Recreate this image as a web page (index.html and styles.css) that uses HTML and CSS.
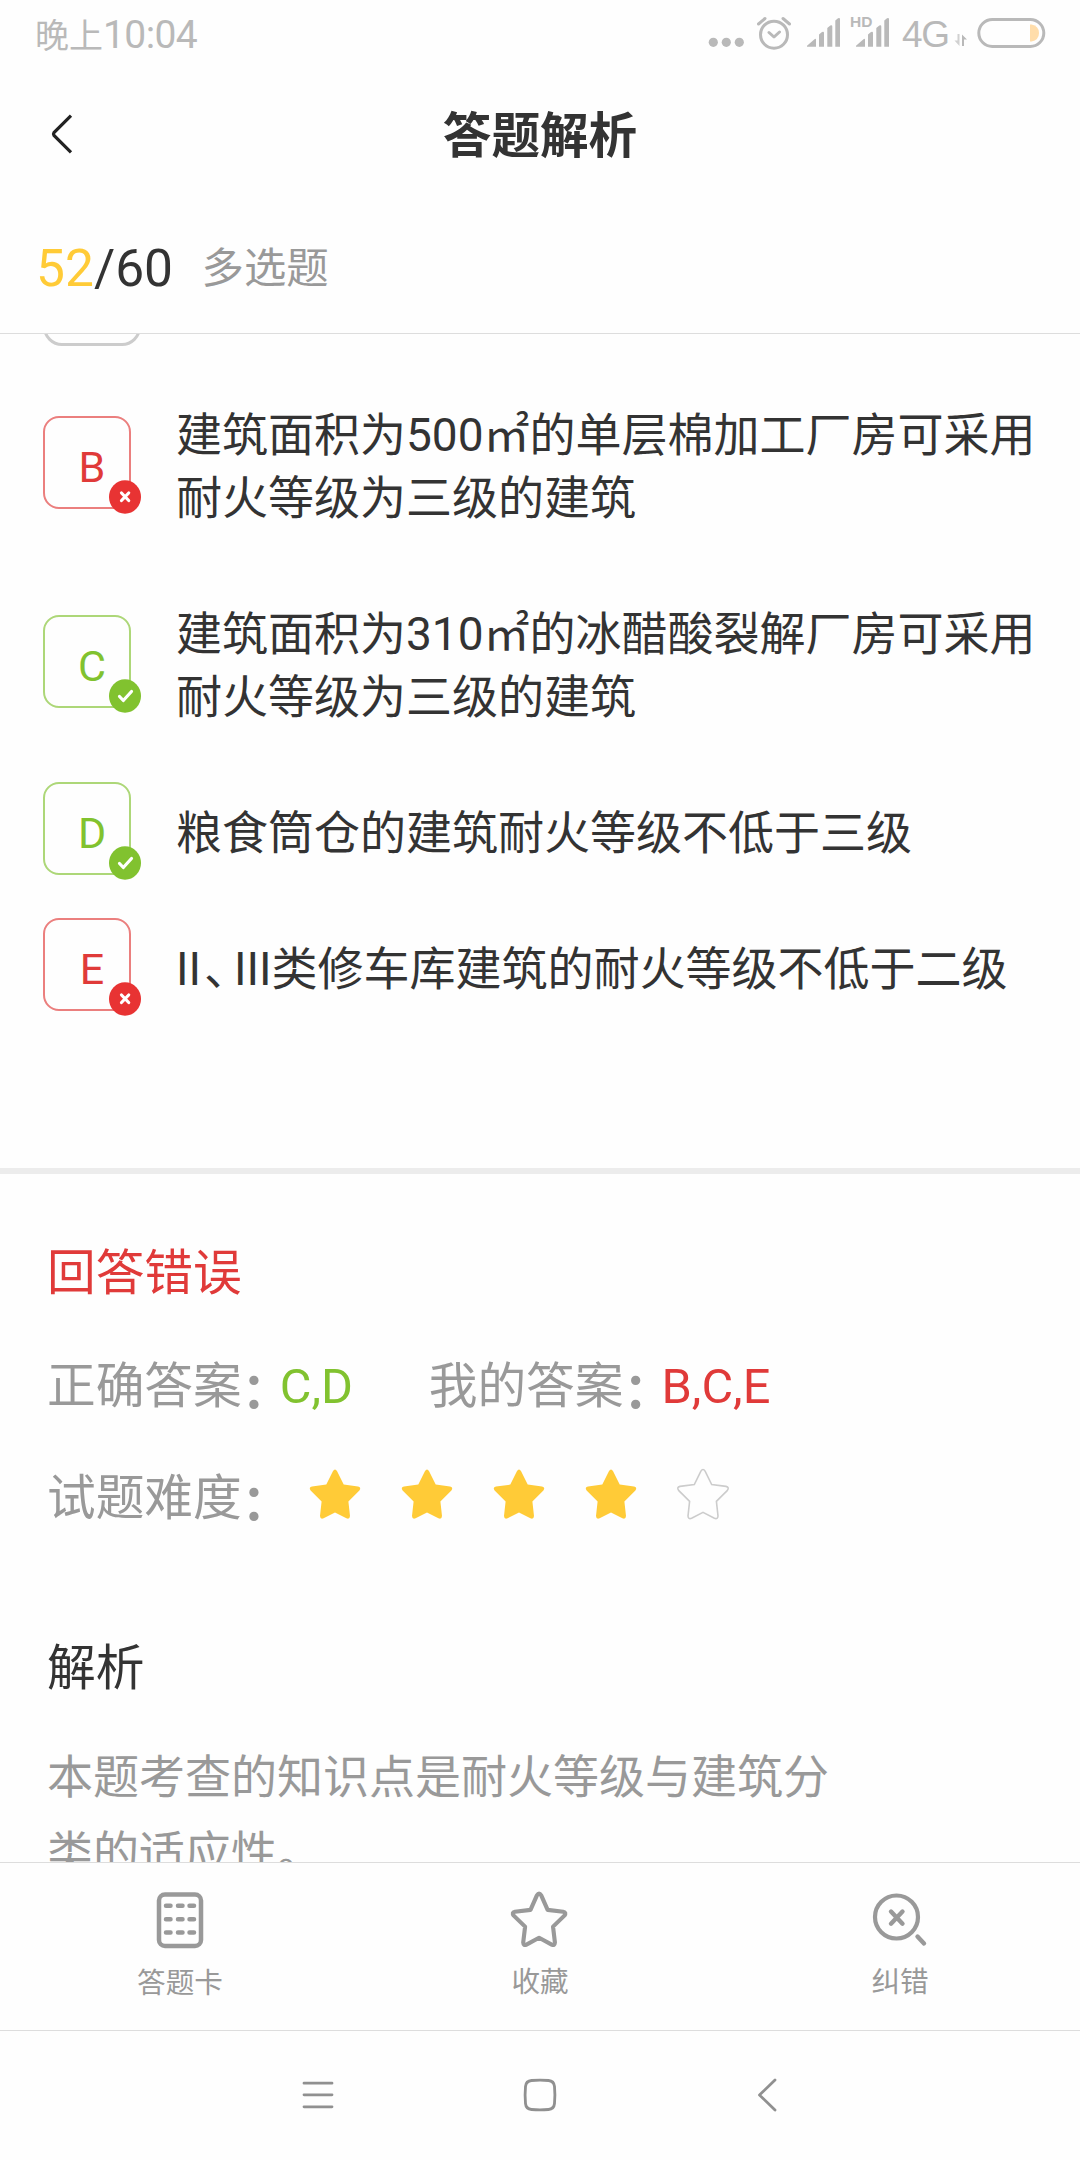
FILE: index.html
```html
<!DOCTYPE html>
<html lang="zh-CN">
<head>
<meta charset="utf-8">
<title>答题解析</title>
<link rel="stylesheet" href="styles.css">
</head>
<body>
<svg class="defs" width="0" height="0" aria-hidden="true">
  <symbol id="star" viewBox="0 0 54 54"><path d="M24.9 4.2q2.1-3.4 4.2 0L35.7 17.6 50 19.4q3.6.9 1.4 4L40.4 34.4 42 49q-.2 3.600-3.600 2.300L27 45.400 15.600 51.300Q12.200 52.600 12 49L13.600 34.400 2.600 23.400Q.4 20.300 4 19.400L18.300 17.600Z"/></symbol>
  <symbol id="wrong" viewBox="0 0 32 34"><ellipse cx="16" cy="17" rx="16" ry="16.700" fill="#e83333"/><path d="M12.500 13 19.700 20.500M19.700 13 12.500 20.500" fill="none" stroke="#fff" stroke-width="3.200" stroke-linecap="round"/></symbol>
  <symbol id="right" viewBox="0 0 32 34"><ellipse cx="16" cy="17" rx="16" ry="16.700" fill="#81c22f"/><path d="M10.500 17.500 14.300 21.500 22.500 12.500" fill="none" stroke="#fff" stroke-width="3.200" stroke-linecap="round" stroke-linejoin="round"/></symbol>
</svg>
<div class="screen">
  <div class="status">
    <div class="clock">晚上<span class="digits">10:04</span></div>
    <svg class="status-icons" width="340" height="60" viewBox="0 0 340 60">
      <g fill="#b9b9b9">
        <circle cx="13.300" cy="42.300" r="4.600"/><circle cx="26.300" cy="42.300" r="4.600"/><circle cx="39.300" cy="42.300" r="4.600"/>
        <path d="M107 46.700v-1l7.500-6.500q1.500-1 1.500.5v7zM119 46.700V34.500l3-2.500q2-1 2 1v13.700zM127.300 46.700V28l3-2.500q2-1 2 1v20.200zM135.300 46.700V20.500l2.700-2.200q2-1 2 1v27.400z"/>
        <path d="M156 46.700v-1l7.500-6.500q1.500-1 1.500.5v7zM168 46.700V34.500l3-2.500q2-1 2 1v13.700zM176.300 46.700V28l3-2.500q2-1 2 1v20.200zM184.300 46.700V20.500l2.700-2.200q2-1 2 1v27.400z"/>
        <text class="hd" x="150" y="27">HD</text>
        <text class="net" x="202" y="47" textLength="48">4G</text>
        <path d="M262 46V34.500L267 39.500H264V46z"/><path d="M259.500 34v12L254.500 40.500H257.500V34z" opacity=".65"/>
      </g>
      <g fill="none" stroke="#b9b9b9" stroke-width="3" stroke-linecap="round" stroke-linejoin="round">
        <circle cx="74" cy="34.700" r="13.500"/><path d="M69 32.500 74 37 79.500 32M58.500 24 65 18.500M83 18.500 89.500 24"/>
        <rect x="278.800" y="19.500" width="65" height="27" rx="13.500"/>
      </g>
      <path d="M330 24.500h1.500q7.500 1.500 7.500 8.500t-7.500 8.500H330z" fill="#ffddaa"/>
    </svg>
  </div>
  <header class="titlebar">
    <svg class="back" width="28" height="44" viewBox="0 0 28 44"><path d="M22 3.700 5 20.500q-1 1.500 0 3L22 40.300" fill="none" stroke="#222" stroke-width="3.200"/></svg>
    <h1>答题解析</h1>
  </header>
  <div class="progress"><span class="num"><span class="now">52</span>/60</span><span class="kind">多选题</span></div>
  <main class="content">
    <ul class="options">
      <li class="option first"><div class="mark plain"></div></li>
      <li class="option bad"><div class="mark"><b>B</b><svg class="badge"><use href="#wrong"/></svg></div><p>建筑面积为500㎡的单层棉加工厂房可采用耐火等级为三级的建筑</p></li>
      <li class="option good"><div class="mark"><b>C</b><svg class="badge"><use href="#right"/></svg></div><p>建筑面积为310㎡的冰醋酸裂解厂房可采用耐火等级为三级的建筑</p></li>
      <li class="option good"><div class="mark"><b>D</b><svg class="badge"><use href="#right"/></svg></div><p>粮食筒仓的建筑耐火等级不低于三级</p></li>
      <li class="option bad"><div class="mark"><b>E</b><svg class="badge"><use href="#wrong"/></svg></div><p>II<span class="comma">、</span>III类修车库建筑的耐火等级不低于二级</p></li>
    </ul>
    <section class="result">
      <div class="line verdict">回答错误</div>
      <div class="line"><span class="label">正确答案<i>：</i></span><span class="ans ok">C,D</span><span class="label mine">我的答案<i>：</i></span><span class="ans no">B,C,E</span></div>
      <div class="line"><span class="label">试题难度<i>：</i></span>
        <div class="stars"><svg><use href="#star"/></svg><svg><use href="#star"/></svg><svg><use href="#star"/></svg><svg><use href="#star"/></svg><svg class="empty"><use href="#star"/></svg></div>
      </div>
      <h2>解析</h2>
      <p class="explain">本题考查的知识点是耐火等级与建筑分<br>类的适应性。</p>
    </section>
  </main>
  <nav class="tabs">
    <a class="tab"><svg width="60" height="60" viewBox="0 0 60 60"><rect x="9" y="4.500" width="42" height="51.500" rx="6" stroke-width="4.500"/><path d="M16 15.700h4.500M28 15.700h4.500M39.500 15.700H44M16 29.200h4.500M28 29.200h4.500M39.500 29.200H44M16 42.500h4.500M28 42.500h4.500M39.500 42.500H44" stroke-width="4.500"/></svg><span>答题卡</span></a>
    <a class="tab"><svg width="60" height="60" viewBox="0 0 60 60"><path d="M26.800 5.400q2.200-3.400 4.400 0l6.500 14.800 15.800 1.900q3.600.8 1.200 3.900L43.200 37.200l1.900 16q-.2 3.500-3.300 2.200L29 48.500 16.200 55.400q-3.100 1.300-3.300-2.200l1.900-16L3.300 26q-2.400-3.100 1.200-3.900l15.800-1.900Z" transform="translate(.5 0) scale(.985)" stroke-width="4.200"/></svg><span>收藏</span></a>
    <a class="tab"><svg width="60" height="60" viewBox="0 0 60 60"><circle cx="26.500" cy="27" r="21.500" stroke-width="4.200"/><path d="M21 21.500 32.500 33.700M32.500 21.500 21 33.700M47.500 46.500 54 53.500" stroke-width="4.400"/></svg><span>纠错</span></a>
  </nav>
  <div class="sysnav">
    <svg width="34" height="34" viewBox="0 0 34 34"><path d="M3 5.200h28M3 16.800h28M3 28.800h28"/></svg>
    <svg width="34" height="34" viewBox="0 0 34 34"><path d="M8.500 2.500q8.500-.8 17 0 5.500.5 6 6 .8 8.500 0 17-.5 5.500-6 6-8.500.8-17 0-5.500-.5-6-6-.8-8.500 0-17 .5-5.500 6-6z"/></svg>
    <svg width="34" height="34" viewBox="0 0 34 34"><path d="M30 2 14.500 17 30 32"/></svg>
  </div>
</div>
</body>
</html>
```
FILE: styles.css
```css
*, *::before { box-sizing: border-box; }
body { margin: 0; background: #fefefe; color: #333; font-family: Roboto, "Noto Sans CJK SC", sans-serif; }
h1, h2, p, ul { margin: 0; padding: 0; font-weight: 400; }
.defs { position: absolute; }
.screen { width: 1080px; height: 2160px; display: flex; flex-direction: column; overflow: hidden; }

.status { height: 70px; display: flex; justify-content: space-between; padding: 0 0 0 35px; color: #b9b9b9; flex: none; }
.clock { font-size: 34px; line-height: 71px; height: 70px; white-space: nowrap; }
.digits { font-size: 39px; letter-spacing: -0.6px; }
.status-icons { margin-right: 40px; overflow: visible; }
.hd { font: 700 15.500px "Liberation Sans", sans-serif; }
.net { font: 37px "Liberation Sans", sans-serif; }

.titlebar { height: 130px; display: grid; grid-template-columns: 80px 1fr 80px; align-items: center; flex: none; }
.back { margin: 0 0 2px 49px; }
h1 { font-size: 48.6px; font-weight: 700; line-height: 70px; text-align: center; padding-top: 4px; }

.progress { height: 134px; border-bottom: 1px solid #ddd; display: flex; align-items: center; padding: 4px 0 0 36px; flex: none; }
.num { font-size: 51.5px; line-height: 70px; }
.now { color: #ffcb37; }
.kind { margin-left: 28.500px; font-size: 42.4px; line-height: 70px; color: #999; }

.content { height: 1528px; overflow: hidden; flex: none; }
.options { list-style: none; margin-top: -104px; height: 938px; }
.option { display: flex; align-items: center; padding: 36.5px 0 36.5px 43px; font-size: 46px; line-height: 63px; }
.option p { width: 880px; margin: 1px 0 -1px 35px; }
.comma { letter-spacing: -17px; margin: 0 1px 0 3px; }
.first { height: 136px; }
.mark { position: relative; width: 98px; height: 98px; margin: -18.500px 0 -16.500px; flex: none; display: flex; justify-content: center; align-items: center; }
.mark::before { content: ""; position: absolute; left: 0; top: 0; width: 87.500px; height: 93px; border: 2px solid; border-radius: 16px; opacity: .65; }
.mark b { font-size: 43px; font-weight: 400; line-height: 50px; padding-top: 4px; }
.plain { border: 3px solid #ccc; border-radius: 19px; }
.plain::before { display: none; }
.badge { position: absolute; right: 0; bottom: 0; width: 32px; height: 34px; }
.bad .mark { color: #e03a39; }
.good .mark { color: #81c22f; }

.result { border-top: 6px solid #ececec; padding: 44px 47px 0; }
.line { height: 112.500px; display: flex; line-height: 111px; font-size: 48.700px; color: #999; white-space: nowrap; }
.verdict, .ans.no { color: #e03a39; }
.label i { position: relative; top: 5px; font-style: normal; font-weight: 700; letter-spacing: -10.700px; }
.ok { color: #81c22f; width: 149px; }
.stars { display: flex; align-items: center; gap: 38px; margin: -11px 0 0 28px; }
.stars svg { width: 54px; height: 54px; fill: #ffcb37; }
.stars .empty { fill: none; stroke: #ccc; stroke-width: 1.600; }
h2 { font-size: 48.700px; line-height: 70px; margin-top: 78px; }
.explain { font-size: 46px; line-height: 76px; color: #999; margin-top: 35px; }

.tabs { height: 169px; border-top: 1px solid #ddd; border-bottom: 1px solid #ddd; display: grid; grid-template-columns: repeat(3, 1fr); background: #fefefe; flex: none; }
.tab { display: flex; flex-direction: column; align-items: center; padding-top: 27px; color: #999; font-size: 28.600px; line-height: 40px; }
.tab svg { fill: none; stroke: #999; stroke-linecap: round; stroke-linejoin: round; }
.tab span { margin-top: 12px; }
.tab:first-child span { margin-top: 13px; }
.sysnav { height: 127px; display: flex; justify-content: center; gap: 188px; align-items: center; flex: none; }
.sysnav svg { fill: none; stroke: #909090; stroke-width: 2.800; stroke-linecap: round; stroke-linejoin: round; }
```
